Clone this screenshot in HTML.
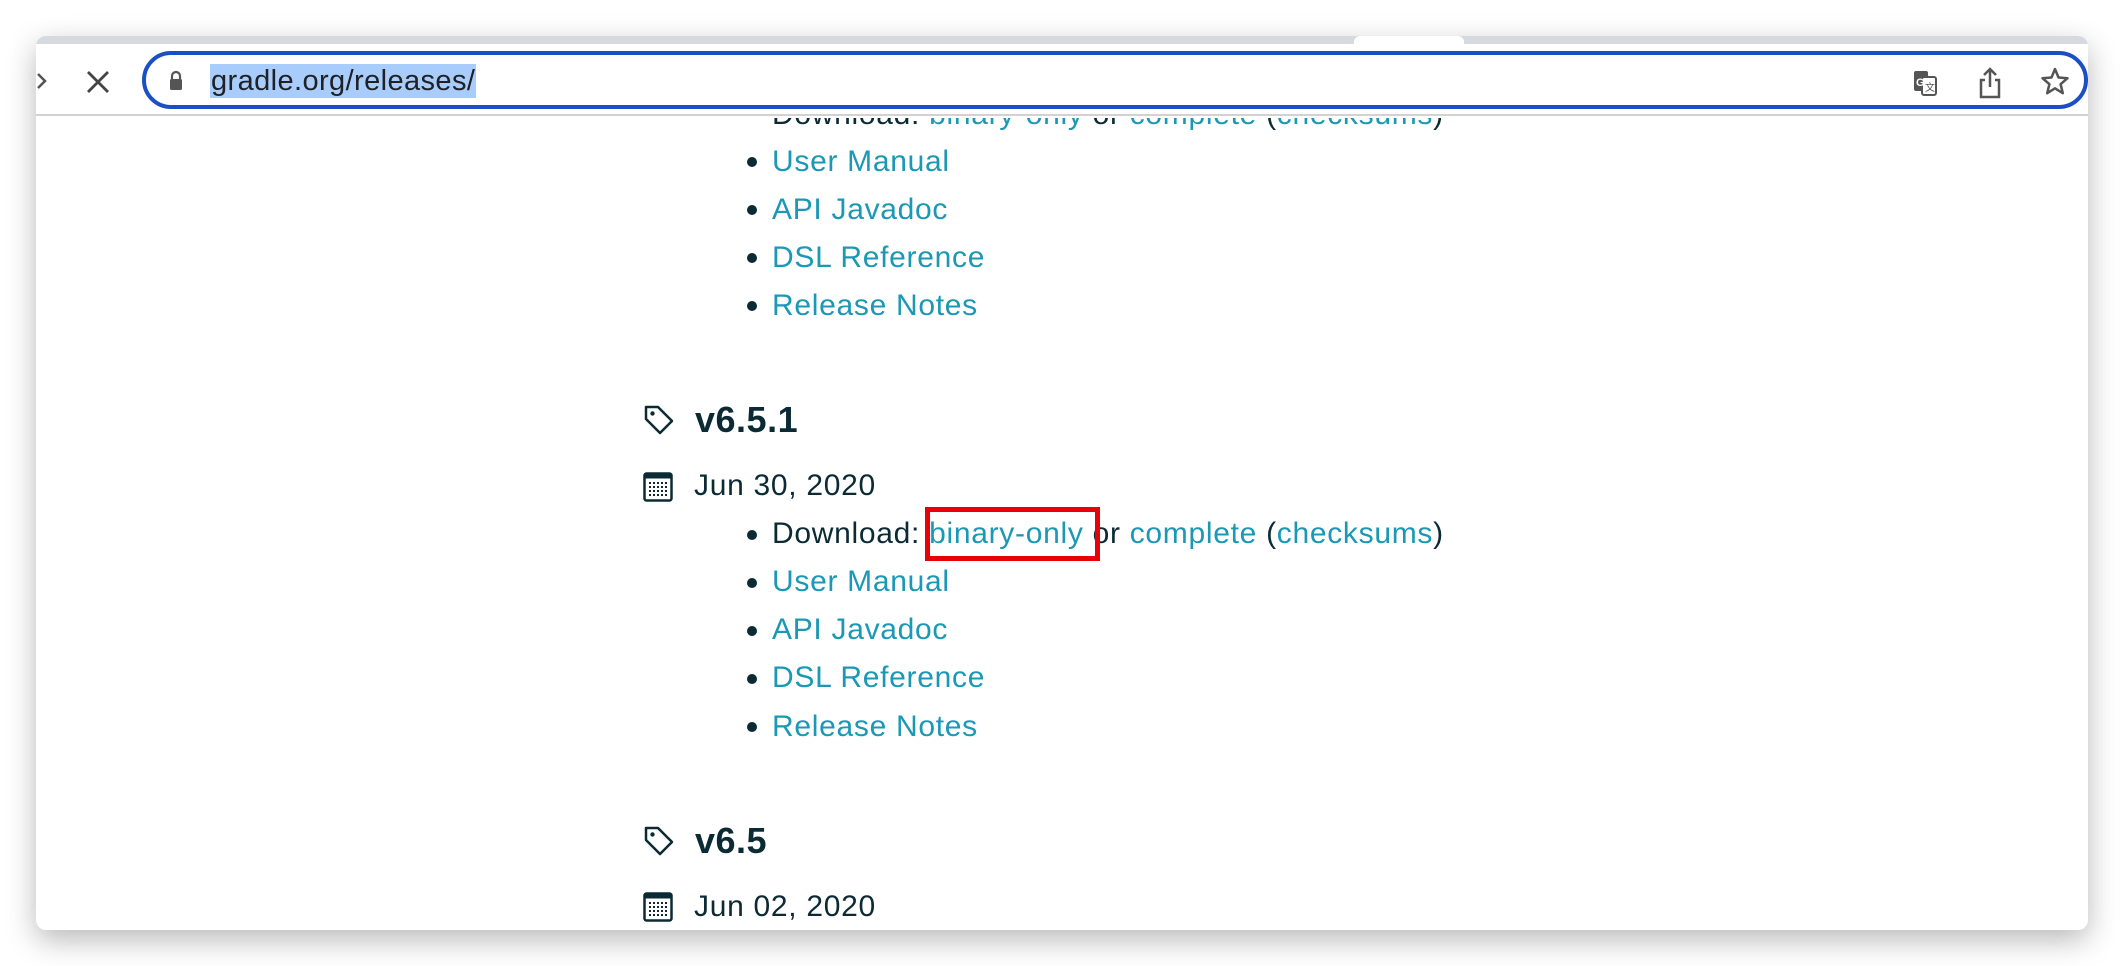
<!DOCTYPE html>
<html><head><meta charset="utf-8"><style>
*{margin:0;padding:0;box-sizing:border-box}
body{width:2124px;height:966px;background:#fff;position:relative;overflow:hidden;font-family:"Liberation Sans",sans-serif}
.win{position:absolute;left:36px;top:36px;width:2052px;height:894px;background:#fff;border-radius:10px;box-shadow:0 10px 30px rgba(0,0,0,.28);overflow:hidden}
.tabs{position:absolute;left:0;top:0;width:100%;height:8px;background:#d6d9de}
.tabw{position:absolute;left:1318px;top:0;width:110px;height:8px;background:#fff;border-radius:6px 6px 0 0}
.bar{position:absolute;left:0;top:8px;width:100%;height:72px;background:#fff;border-bottom:2px solid #d2d2d2}
.omni{position:absolute;left:106px;top:15px;width:1946px;height:58px;border:4px solid #1a4fc5;border-radius:29px}
.url{position:absolute;font-size:29px;color:#202124;background:#a8cdfd;line-height:34px;padding:0 1px;letter-spacing:0.4px}
.t{position:absolute;font-size:30px;color:#0b2a33;white-space:nowrap;line-height:36px;letter-spacing:0.7px}
a{color:#1a98b5;text-decoration:none}
.b{position:absolute;width:10px;height:10px;border-radius:50%;background:#0b2a33}
.h{position:absolute;font-size:36px;font-weight:bold;color:#0b2a33;line-height:40px;letter-spacing:0.5px}
.red{position:absolute;left:925px;top:507px;width:175px;height:54px;border:5px solid #e8000b}
</style></head><body>
<div class="win">
<div class="tabs"><div class="tabw"></div></div>
<div class="bar"></div>
<svg style="position:absolute;left:0;top:30px" width="20" height="30"><path d="M2 8l7 7-7 7" stroke="#555" stroke-width="2.5" fill="none"/></svg>
<svg style="position:absolute;left:49px;top:33px" width="26" height="26"><path d="M3 3l20 20M23 3L3 23" stroke="#444" stroke-width="2.8"/></svg>
<div class="omni"></div>
<svg style="position:absolute;left:132px;top:33px" width="16" height="24"><path d="M4 10V7a4 4 0 0 1 8 0v3" stroke="#555" stroke-width="2.2" fill="none"/><rect x="2" y="10" width="12" height="11" rx="1.5" fill="#555"/></svg>
<div class="url" style="left:174px;top:28px">gradle.org/releases/</div>
<svg style="position:absolute;left:1876px;top:33px" width="28" height="28"><rect x="2" y="2" width="14" height="20" rx="2" fill="#555"/><rect x="10" y="8" width="14" height="18" rx="2" fill="#fff" stroke="#555" stroke-width="2"/><text x="4" y="17" font-size="11" font-weight="bold" fill="#fff" font-family="Liberation Sans">G</text><text x="13" y="22" font-size="10" fill="#555" font-family="Liberation Sans">文</text></svg>
<svg style="position:absolute;left:1941px;top:30px" width="26" height="34"><path d="M13 3v18M7 9l6-6 6 6M8 14H4v17h18V14h-4" stroke="#555" stroke-width="2.5" fill="none"/></svg>
<svg style="position:absolute;left:2004px;top:30px" width="30" height="32"><path d="M15 3l3.5 8.5 9 .7-6.9 6 2.2 9L15 22.3 7.2 27.2l2.2-9-6.9-6 9-.7z" stroke="#555" stroke-width="2.5" fill="none" stroke-linejoin="round"/></svg>
</div>

<svg width="0" height="0" style="position:absolute"><defs>
<g id="cal"><rect x="1.5" y="1.5" width="27" height="27" rx="2" fill="none" stroke="#0b2a33" stroke-width="2.5"/><rect x="1.5" y="1.5" width="27" height="5" fill="#0b2a33"/>
<g fill="#0b2a33">
<rect x="6" y="10" width="2" height="2"/><rect x="10" y="10" width="2" height="2"/><rect x="14" y="10" width="2" height="2"/><rect x="18" y="10" width="2" height="2"/><rect x="22" y="10" width="2" height="2"/>
<rect x="6" y="14" width="2" height="2"/><rect x="10" y="14" width="2" height="2"/><rect x="14" y="14" width="2" height="2"/><rect x="18" y="14" width="2" height="2"/><rect x="22" y="14" width="2" height="2"/>
<rect x="6" y="18" width="2" height="2"/><rect x="10" y="18" width="2" height="2"/><rect x="14" y="18" width="2" height="2"/><rect x="18" y="18" width="2" height="2"/><rect x="22" y="18" width="2" height="2"/>
<rect x="6" y="22" width="2" height="2"/><rect x="10" y="22" width="2" height="2"/><rect x="14" y="22" width="2" height="2"/><rect x="18" y="22" width="2" height="2"/><rect x="22" y="22" width="2" height="2"/>
</g></g></defs></svg>

<div style="position:absolute;left:0;top:118px;width:2124px;height:812px;overflow:hidden">
<div style="position:absolute;left:0;top:-116px">
<div class="t" style="left:772px;top:95px">Download: <a>binary-only</a> or <a>complete</a> (<a>checksums</a>)</div>
<div class="b" style="left:747px;top:155px"></div><div class="t" style="left:772px;top:142px"><a>User Manual</a></div>
<div class="b" style="left:747px;top:203px"></div><div class="t" style="left:772px;top:190px"><a>API Javadoc</a></div>
<div class="b" style="left:747px;top:251px"></div><div class="t" style="left:772px;top:238px"><a>DSL Reference</a></div>
<div class="b" style="left:747px;top:299px"></div><div class="t" style="left:772px;top:286px"><a>Release Notes</a></div>

<svg style="position:absolute;left:643px;top:402px" width="32" height="32"><path d="M3 3h12l14 14-12 12L3 15z" stroke="#0b2a33" stroke-width="2.5" fill="none" stroke-linejoin="round"/><circle cx="9.5" cy="9.5" r="2.2" fill="#0b2a33"/></svg>
<div class="h" style="left:695px;top:398px">v6.5.1</div>
<svg style="position:absolute;left:643px;top:470px" width="30" height="30"><use href="#cal"/></svg>
<div class="t" style="left:694px;top:466px">Jun 30, 2020</div>
<div class="b" style="left:747px;top:528px"></div><div class="t" style="left:772px;top:514px">Download: <a>binary-only</a> or <a>complete</a> (<a>checksums</a>)</div>
<div class="b" style="left:747px;top:576px"></div><div class="t" style="left:772px;top:562px"><a>User Manual</a></div>
<div class="b" style="left:747px;top:624px"></div><div class="t" style="left:772px;top:610px"><a>API Javadoc</a></div>
<div class="b" style="left:747px;top:672px"></div><div class="t" style="left:772px;top:658px"><a>DSL Reference</a></div>
<div class="b" style="left:747px;top:720px"></div><div class="t" style="left:772px;top:707px"><a>Release Notes</a></div>
<div class="red" style="top:505px"></div>

<svg style="position:absolute;left:643px;top:823px" width="32" height="32"><path d="M3 3h12l14 14-12 12L3 15z" stroke="#0b2a33" stroke-width="2.5" fill="none" stroke-linejoin="round"/><circle cx="9.5" cy="9.5" r="2.2" fill="#0b2a33"/></svg>
<div class="h" style="left:695px;top:819px">v6.5</div>
<svg style="position:absolute;left:643px;top:890px" width="30" height="30"><use href="#cal"/></svg>
<div class="t" style="left:694px;top:887px">Jun 02, 2020</div>
</div>
</div>
</body></html>
